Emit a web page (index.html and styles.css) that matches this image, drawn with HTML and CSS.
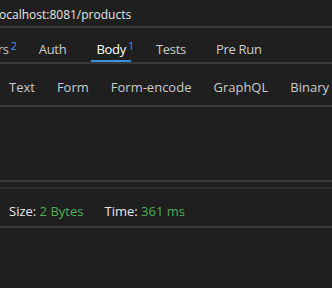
FILE: index.html
```html
<!DOCTYPE html>
<html lang="en-US">
	<head>
		<meta charset="utf-8">
		<title>Request</title>
		<link rel="stylesheet" href="styles.css">
	</head>
	<body>
		<div class="url">localhost:8081/products</div>
		<nav class="tabs">
			<span class="tab first">Headers<sup>2</sup></span>
			<span class="tab">Auth</span>
			<span class="tab active">Body<sup>1</sup></span>
			<span class="tab">Tests</span>
			<span class="tab">Pre Run</span>
		</nav>
		<nav class="subtabs">
			<span>Text</span>
			<span>Form</span>
			<span>Form-encode</span>
			<span>GraphQL</span>
			<span>Binary</span>
		</nav>
		<div class="editor"></div>
		<div class="status">
			<span>Size: <em>2 Bytes</em></span>
			<span>Time: <em>361 ms</em></span>
		</div>
	</body>
</html>
```

FILE: styles.css
```css
html,
body {
	background: #1f1f1f;
	height: 100%;
}
body {
	color: #cccccc;
	font-family: "Open Sans", "Noto Sans", sans-serif;
	font-size: 13px;
	margin: 0;
	overflow: hidden;
}
.url {
	border-bottom: 2px solid #3a3a3a;
	color: #e6e6e6;
	font-size: 12px;
	height: 26px;
	line-height: 30px;
	margin-left: -4px;
	white-space: nowrap;
}
.tabs {
	border-bottom: 2px solid #3a3a3a;
	display: flex;
	gap: 20px;
	height: 34px;
	white-space: nowrap;
}
.tab {
	box-sizing: border-box;
	height: 34px;
	letter-spacing: -0.3px;
	line-height: 42px;
	padding: 0 5px;
	position: relative;
}
.tab.first {
	margin-left: -45px;
}
.tab.active {
	border-bottom: 2px solid #3c8fd8;
	color: #ffffff;
}
sup {
	color: #3794ff;
	font-size: 11px;
	left: 100%;
	line-height: 1;
	margin-left: -3px;
	position: absolute;
	top: 12px;
}
.subtabs {
	border-bottom: 2px solid #3a3a3a;
	display: flex;
	gap: 22px;
	height: 41px;
	line-height: 46px;
	padding-left: 9px;
	white-space: nowrap;
}
.editor {
	border-bottom: 2px solid #3a3a3a;
	height: 73px;
}
.status {
	border-bottom: 2px solid #3a3a3a;
	border-top: 2px solid #2e2e2e;
	color: #e8e8e8;
	display: flex;
	gap: 21px;
	height: 37px;
	line-height: 44px;
	margin-top: 5px;
	padding-left: 9px;
}
em {
	color: #4caf50;
	font-style: normal;
}
```
